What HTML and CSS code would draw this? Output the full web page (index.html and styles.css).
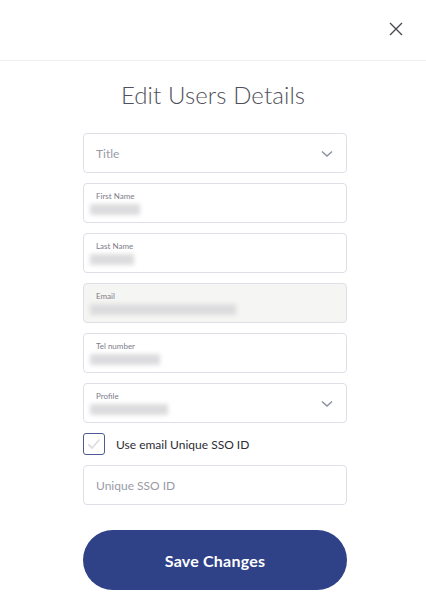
FILE: index.html
```html
<!DOCTYPE html>
<html lang="en">

<head>
    <meta charset="UTF-8">
    <meta name="viewport" content="width=device-width, initial-scale=1.0">
    <title>Edit Users Details</title>
    <link rel="stylesheet" href="styles.css">
</head>

<body>
    <div class="modal">
        <div class="modal-head">
            <button class="close" aria-label="Close">
                <svg width="14" height="14" viewBox="0 0 14 14">
                    <path d="M1 1 L13 13 M13 1 L1 13" stroke="#4a4a52" stroke-width="1.4" fill="none" />
                </svg>
            </button>
        </div>
        <h1 class="title">Edit Users Details</h1>
        <form class="form">
            <div class="field select">
                <span class="placeholder">Title</span>
                <svg class="chev" width="12" height="8" viewBox="0 0 12 8">
                    <path d="M1 1.5 L6 6 L11 1.5" stroke="#8a8f9e" stroke-width="1.4" fill="none" />
                </svg>
            </div>
            <div class="field filled">
                <span class="label">First Name</span>
                <span class="blur" style="width: 50px"></span>
            </div>
            <div class="field filled">
                <span class="label">Last Name</span>
                <span class="blur" style="width: 44px"></span>
            </div>
            <div class="field filled disabled">
                <span class="label">Email</span>
                <span class="blur" style="width: 146px"></span>
            </div>
            <div class="field filled">
                <span class="label">Tel number</span>
                <span class="blur" style="width: 70px"></span>
            </div>
            <div class="field filled select">
                <span class="label">Profile</span>
                <span class="blur" style="width: 78px"></span>
                <svg class="chev" width="12" height="8" viewBox="0 0 12 8">
                    <path d="M1 1.5 L6 6 L11 1.5" stroke="#8a8f9e" stroke-width="1.4" fill="none" />
                </svg>
            </div>
            <label class="check">
                <span class="box">
                    <svg width="14" height="12" viewBox="0 0 14 12">
                        <path d="M1.5 6.5 L5 10 L12.5 1.5" stroke="#dedee2" stroke-width="1.8" fill="none" />
                    </svg>
                </span>
                Use email Unique SSO ID
            </label>
            <div class="field">
                <span class="placeholder">Unique SSO ID</span>
            </div>
            <button type="button" class="btn">Save Changes</button>
        </form>
    </div>
</body>

</html>
```

FILE: styles.css
```css
* {
    box-sizing: border-box;
    padding: 0;
    margin: 0;
}

html,
body {
    width: 100%;
    height: 100%;
}

body {
    background: #fff;
    font-family: Lato, "Open Sans", sans-serif;
    color: #333;
}

.modal-head {
    height: 61px;
    border-bottom: 1px solid #efeff1;
    display: flex;
    justify-content: flex-end;
    align-items: flex-start;
    padding: 22px 23px 0 0;
}

.close {
    background: none;
    border: none;
    width: 14px;
    height: 14px;
    display: block;
}

.close svg {
    display: block;
}

.title {
    font-weight: 300;
    font-size: 24px;
    line-height: 32px;
    color: #50505a;
    text-align: center;
    margin: 18px 0 22px;
    letter-spacing: 0.1px;
}

.form {
    width: 264px;
    margin-left: 83px;
    display: flex;
    flex-direction: column;
    gap: 10px;
}

.field {
    position: relative;
    height: 40px;
    border: 1px solid #dfdfe8;
    border-radius: 4px;
    background: #fff;
    padding: 0 12px;
    display: flex;
    flex-direction: column;
    justify-content: center;
}

.field.filled {
    justify-content: flex-start;
    padding: 7px 12px 0 6px;
}

.field.disabled {
    background: #f5f5f3;
}

.placeholder {
    font-size: 12px;
    color: #9a9aa6;
}

.label {
    font-size: 8px;
    line-height: 10px;
    color: #7c7c88;
    padding-left: 6px;
}

.blur {
    display: block;
    height: 11px;
    margin-top: 3px;
    background: #dcdcde;
    filter: blur(2px);
}

.chev {
    position: absolute;
    right: 13px;
    top: 16px;
}

.check {
    display: flex;
    align-items: center;
    gap: 11px;
    font-size: 12px;
    color: #2c2c34;
    height: 22px;
}

.box {
    width: 22px;
    height: 22px;
    border: 1px solid #4d5a93;
    border-radius: 3px;
    display: flex;
    align-items: center;
    justify-content: center;
}

.btn {
    margin-top: 15px;
    height: 60px;
    border: none;
    border-radius: 30px;
    background: #2f4187;
    color: #fff;
    font-family: Lato, "Open Sans", sans-serif;
    font-weight: 700;
    font-size: 16px;
    letter-spacing: 0.2px;
}
```
